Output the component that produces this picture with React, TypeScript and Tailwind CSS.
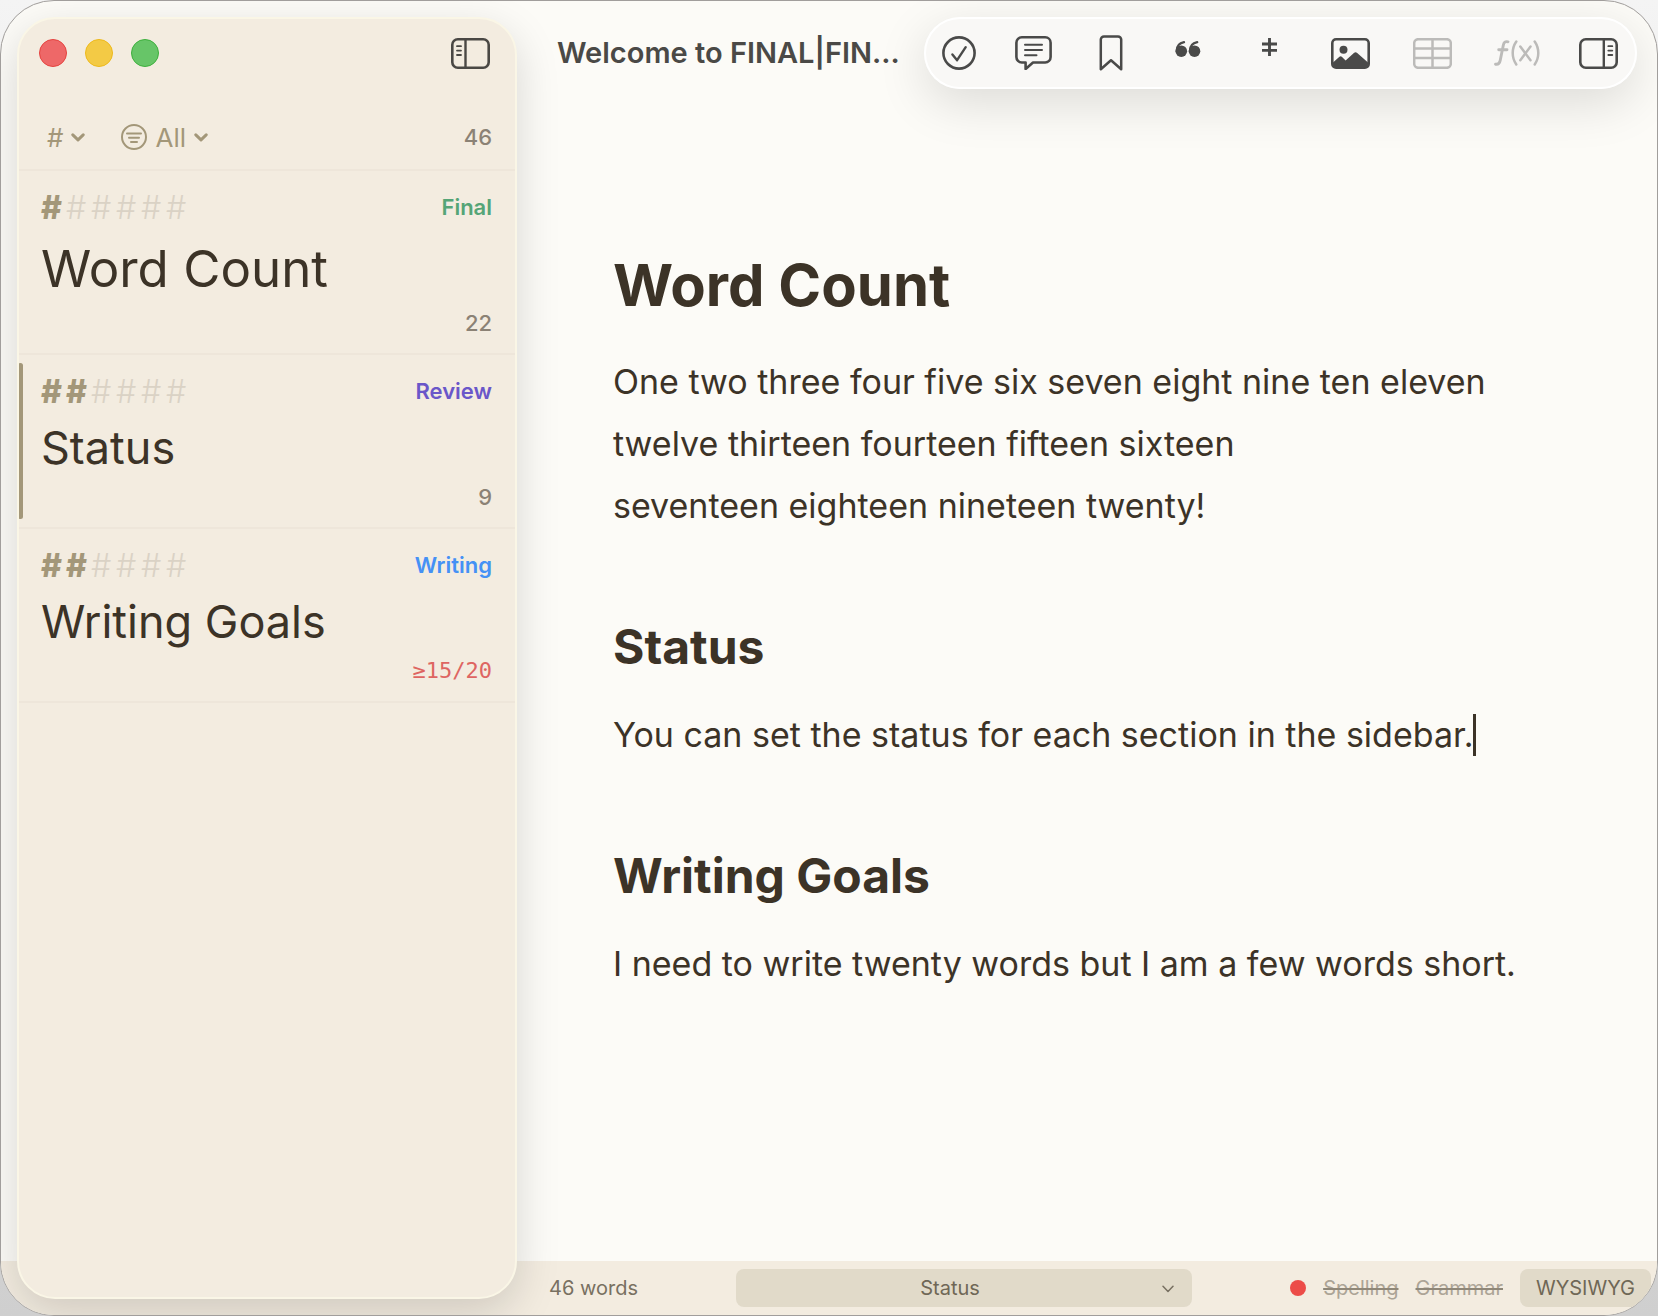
import type { ReactNode } from "react";
import clsx from "clsx";

type Section = {
    title: string;
    level: number;
    status: string;
    statusClass: string;
    count: string;
    active?: boolean;
    overdue?: boolean;
};

const sections: Section[] = [
    { title: "Word Count", level: 1, status: "Final", statusClass: "text-[#55a577]", count: "22" },
    { title: "Status", level: 2, status: "Review", statusClass: "text-[#6a57c9]", count: "9", active: true },
    { title: "Writing Goals", level: 2, status: "Writing", statusClass: "text-[#4591f5]", count: "≥15/20", overdue: true },
];

function Chevron() {
    return (
        <svg width="14" height="9" viewBox="0 0 14 9" fill="none" stroke="currentColor" strokeWidth="3" strokeLinecap="round" strokeLinejoin="round">
            <path d="M1.8 1.8 7 6.8l5.2-5" />
        </svg>
    );
}

function PanelIcon({ side }: { side: "left" | "right" }) {
    return (
        <svg width="39" height="31" viewBox="0 0 39 31" fill="none" stroke="currentColor" strokeLinecap="round">
            <rect x="1.3" y="1.3" width="36.4" height="28.4" rx="5.5" strokeWidth="2.6" />
            {side === "left" ? (
                <>
                    <path d="M14.5 2v27" strokeWidth="2.4" />
                    <path d="M6 8.2h4M6 12.6h4M6 17h4" strokeWidth="1.8" />
                </>
            ) : (
                <>
                    <path d="M24.8 2v27" strokeWidth="2.4" />
                    <path d="M29.3 8.2h4M29.3 12.6h4M29.3 17h4" strokeWidth="1.8" />
                </>
            )}
        </svg>
    );
}

const tools: { label: string; width: string; disabled?: boolean; icon: ReactNode }[] = [
    {
        label: "Check",
        width: "w-[70px]",
        icon: (
            <svg width="34" height="34" viewBox="0 0 34 34" fill="none" stroke="currentColor" strokeWidth="2.6" strokeLinecap="round" strokeLinejoin="round">
                <circle cx="17" cy="17" r="15.6" />
                <path d="m10.4 18.4 4.7 5.8 8.6-13" strokeWidth="2.4" />
            </svg>
        ),
    },
    {
        label: "Comment",
        width: "w-[78px]",
        icon: (
            <svg width="37" height="34" viewBox="0 0 37 34" fill="none" stroke="currentColor" strokeWidth="2.6" strokeLinecap="round" strokeLinejoin="round">
                <path d="M6.8 1.3h23.4a5.4 5.4 0 0 1 5.4 5.4v14.4a5.4 5.4 0 0 1-5.4 5.4H18L10.6 33v-6.5H6.8a5.4 5.4 0 0 1-5.4-5.4V6.7a5.4 5.4 0 0 1 5.4-5.4Z" />
                <path d="M10 8.8h17M10 14h17M10 19.2h11.5" strokeWidth="2" />
            </svg>
        ),
    },
    {
        label: "Bookmark",
        width: "w-[77px]",
        icon: (
            <svg width="24" height="36" viewBox="0 0 24 36" fill="none" stroke="currentColor" strokeWidth="2.5" strokeLinejoin="round">
                <path d="M1.8 34.2V4.6A3.2 3.2 0 0 1 5 1.4h14a3.2 3.2 0 0 1 3.2 3.2v29.6L12 25.2Z" />
            </svg>
        ),
    },
    {
        label: "Quote",
        width: "w-[78px]",
        icon: (
            <svg width="26" height="16" viewBox="0 0 26 16" fill="currentColor" className="-mt-2">
                <circle cx="6.3" cy="10.2" r="5.8" />
                <circle cx="19.5" cy="10.2" r="5.8" />
                <path d="M1.7 10C1.700 5.400 4.600 2.100 9 1.200M14.900 10c0-4.600 2.900-7.900 7.300-8.800" fill="none" stroke="currentColor" strokeWidth="2.3" strokeLinecap="round" />
            </svg>
        ),
    },
    {
        label: "Footnote",
        width: "w-[84px]",
        icon: (
            <svg width="15" height="18" viewBox="0 0 15 18" fill="none" stroke="currentColor" strokeWidth="2.9" className="-mt-3">
                <path d="M7.5 0v18M0 6h15M0 12.4h15" />
            </svg>
        ),
    },
    {
        label: "Image",
        width: "w-[78px]",
        icon: (
            <svg width="39" height="31" viewBox="0 0 39 31" fill="none">
                <rect x="1.3" y="1.3" width="36.4" height="28.4" rx="3.8" stroke="currentColor" strokeWidth="2.6" />
                <circle cx="12.5" cy="11.8" r="4" fill="currentColor" />
                <path fill="currentColor" d="m2 24.5 6.4-5.7c.8-.7 1.700-.7 2.400 0l3.800 3.700 8.300-7.600c1.100-1 2.200-1 3.300 0L37 24.500v1.700a3.500 3.500 0 0 1-3.500 3.500h-28A3.500 3.500 0 0 1 2 26.200Z" />
            </svg>
        ),
    },
    {
        label: "Table",
        width: "w-[86px]",
        disabled: true,
        icon: (
            <svg width="39" height="31" viewBox="0 0 39 31" fill="none" stroke="currentColor" strokeWidth="2.5">
                <rect x="1.2" y="1.2" width="36.6" height="28.6" rx="4" />
                <path d="M19.5 1.5v28M1.5 10.6h36M1.5 20h36" />
            </svg>
        ),
    },
    {
        label: "Equation",
        width: "w-[84px]",
        disabled: true,
        icon: (
            <svg width="46" height="26" viewBox="0 0 46 26" fill="none" stroke="currentColor" strokeWidth="2.5" strokeLinecap="round" strokeLinejoin="round">
                <path d="M14 1.800c-2.700-.6-4.100.5-4.700 3.400L6.200 20.500c-.6 2.900-2 4.200-4.700 3.700M4.700 9.800h8.300" strokeWidth="2.9" />
                <path d="M22.3 1.5c-4.8 7-4.8 16 0 23M40.7 1.5c4.8 7 4.8 16 0 23" />
                <path d="m26.3 6.6 10.2 13.6M36.5 6.6 26.3 20.2" />
            </svg>
        ),
    },
    { label: "Toggle right panel", width: "w-[78px]", icon: <PanelIcon side="right" /> },
];

function Hashes({ level }: { level: number }) {
    return (
        <div className="flex text-[32px] leading-[34px]">
            {[1, 2, 3, 4, 5, 6].map((n) => (
                <span key={n} className={clsx("w-[25px]", n <= level ? "font-extrabold text-[#a39779]" : "font-light text-[#dad2c5]")}>
                    #
                </span>
            ))}
        </div>
    );
}

function SectionCard({ section }: { section: Section }) {
    return (
        <li className="relative border-b-2 border-[#eee6da] pt-5 pr-[23px] pb-4 pl-[22px]">
            {section.active && <span className="absolute inset-y-2 -left-px w-[5px] rounded-full bg-[#a39779]" />}
            <div className="flex items-start justify-between">
                <Hashes level={section.level} />
                <span className={clsx("text-[22px] leading-8 font-semibold", section.statusClass)}>{section.status}</span>
            </div>
            <h2
                className={clsx(
                    "mt-1 whitespace-nowrap text-[#3c3327]",
                    section.level === 1 ? "text-[51px] leading-[80px]" : "text-[45px] leading-[70px]"
                )}
            >
                {section.title}
            </h2>
            <p
                className={clsx(
                    "text-right text-[22px] leading-7 font-medium",
                    section.overdue ? "font-['DejaVu_Sans_Mono',monospace] text-[#de6562]" : "text-[#8b8275]"
                )}
            >
                {section.count}
            </p>
        </li>
    );
}

function Sidebar() {
    return (
        <aside className="z-10 col-start-1 row-span-2 row-start-1 mt-4 mb-4 ml-4 overflow-hidden rounded-[38px] border-2 border-[#faf6e6] bg-[#f3ece0] shadow-[0_14px_44px_rgba(0,0,0,0.15)]">
            <div className="flex h-[68px] items-center justify-between pr-[25px] pl-5">
                <div className="flex gap-[18px]">
                    <button aria-label="Close" className="size-7 rounded-full border border-[#e4433f] bg-[#ee6868]" />
                    <button aria-label="Minimize" className="size-7 rounded-full border border-[#edb91c] bg-[#f3ca45]" />
                    <button aria-label="Zoom" className="size-7 rounded-full border border-[#3daf3d] bg-[#67c568]" />
                </div>
                <button aria-label="Toggle sidebar" className="text-[#4a4844]">
                    <PanelIcon side="left" />
                </button>
            </div>

            <div className="mt-[18px] flex h-[66px] items-center border-b-2 border-[#eee6da] pr-[23px] pl-7 text-[26px] text-[#a39779]">
                <button className="flex items-center gap-2">
                    <span>#</span>
                    <Chevron />
                </button>
                <button className="ml-9 flex items-center gap-2">
                    <svg width="26" height="26" viewBox="0 0 26 26" fill="none" stroke="currentColor" strokeWidth="2" strokeLinecap="round">
                        <circle cx="13" cy="13" r="12" />
                        <path d="M6 9.5h14M8 13.7h10M10 17.9h6" />
                    </svg>
                    <span>All</span>
                    <Chevron />
                </button>
                <span className="ml-auto text-[22px] font-medium text-[#8b8275]">46</span>
            </div>

            <ul>
                {sections.map((section) => (
                    <SectionCard key={section.title} section={section} />
                ))}
            </ul>
        </aside>
    );
}

function Editor() {
    return (
        <main className="col-start-2 row-start-1 min-w-0">
            <header className="flex items-center justify-between pt-4 pr-5 pl-10">
                <h1 className="min-w-0 truncate text-[29px] font-semibold text-[#4a4946]">Welcome to FINAL|FIN…</h1>
                <div className="flex h-[72px] shrink-0 items-center rounded-full bg-[#f9f8f6] shadow-[0_14px_50px_rgba(0,0,0,0.13)] inset-ring-2 inset-ring-white">
                    {tools.map((tool) => (
                        <button
                            key={tool.label}
                            aria-label={tool.label}
                            disabled={tool.disabled}
                            className={clsx("flex justify-center", tool.width, tool.disabled ? "text-[#bcbbb9]" : "text-[#4a4a49]")}
                        >
                            {tool.icon}
                        </button>
                    ))}
                </div>
            </header>

            <article className="pt-40 pr-20 pb-16 pl-24 text-[34px] leading-[62px] text-[#3c3327]">
                <h2 className="text-[58px] leading-[72px] font-bold">Word Count</h2>
                <p className="mt-[30px]">
                    One two three four five six seven eight nine ten eleven
                    <br />
                    twelve thirteen fourteen fifteen sixteen
                    <br />
                    seventeen eighteen nineteen twenty!
                </p>
                <h3 className="mt-20 text-[48px] leading-[60px] font-bold">Status</h3>
                <p className="mt-[27px] flex items-center">
                    You can set the status for each section in the sidebar.
                    <span className="h-[42px] w-[3px] bg-[#3c3327]" />
                </p>
                <h3 className="mt-20 text-[48px] leading-[60px] font-bold">Writing Goals</h3>
                <p className="mt-[27px]">I need to write twenty words but I am a few words short.</p>
            </article>
        </main>
    );
}

function StatusBar() {
    return (
        <footer className="col-span-2 col-start-1 row-start-2 flex h-[54px] items-center justify-between bg-[#f3ece0] pr-1.5 pl-[548px] text-[20px] text-[#787061]">
            <span className="shrink-0">46 words</span>
            <div className="relative w-[456px]">
                <select
                    aria-label="Section"
                    defaultValue="Status"
                    className="h-[38px] w-full appearance-none rounded-lg bg-[#e1dac9] pr-7 text-center text-[#6f6756] [text-align-last:center]"
                >
                    {sections.map((section) => (
                        <option key={section.title}>{section.title}</option>
                    ))}
                </select>
                <svg className="pointer-events-none absolute top-4 right-[18px]" width="12" height="8" viewBox="0 0 12 8" fill="none" stroke="currentColor" strokeWidth="1.5" strokeLinecap="round" strokeLinejoin="round">
                    <path d="M1 1.2 6 6.5l5-5.3" />
                </svg>
            </div>
            <div className="flex shrink-0 items-center gap-[17px]">
                <span className="size-4 rounded-full bg-[#ec4c48]" />
                <button className="text-[#aca496] line-through decoration-[#8f8778] decoration-2">Spelling</button>
                <button className="text-[#aca496] line-through decoration-[#8f8778] decoration-2">Grammar</button>
                <button className="h-[38px] rounded-lg bg-[#e1dac9] px-4 text-[#6f6756]">WYSIWYG</button>
            </div>
        </footer>
    );
}

export default function App() {
    return (
        <div className="flex min-h-screen bg-linear-to-b from-[#f4f4f4] to-[#cfcfcf] font-[Inter,sans-serif]">
            <div className="grid flex-1 grid-cols-[516px_minmax(0,1fr)] grid-rows-[1fr_auto] overflow-hidden rounded-[54px] border border-[#a19e9c] bg-[#fcfbf7]">
                <Sidebar />
                <Editor />
                <StatusBar />
            </div>
        </div>
    );
}
